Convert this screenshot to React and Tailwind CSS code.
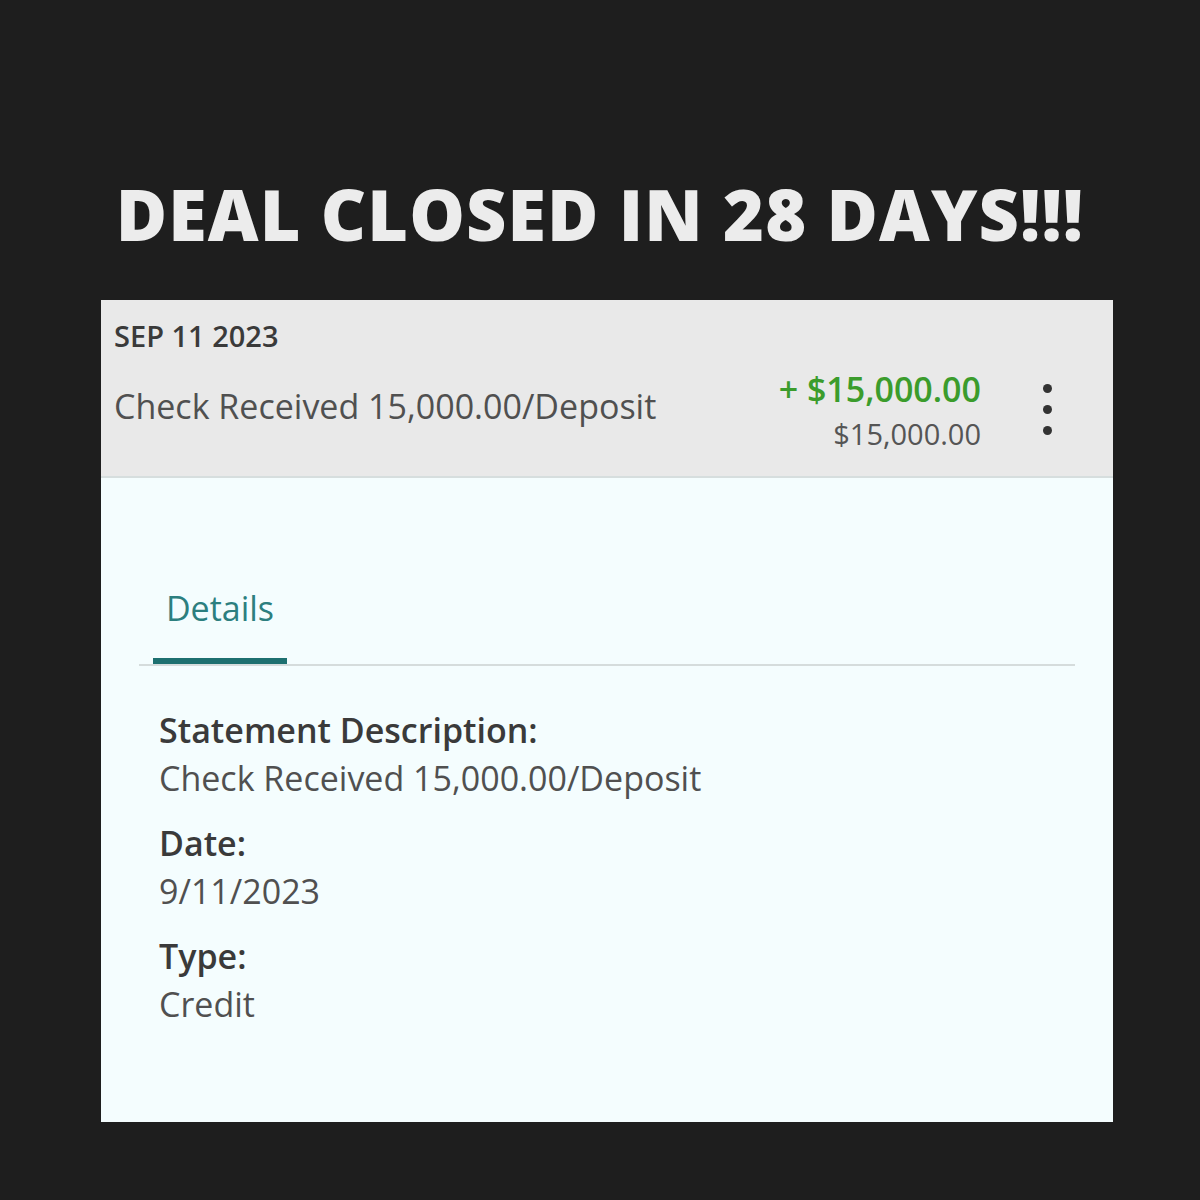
import React from 'react'

const Field = ({ label, value }) => (
  <div className="flex flex-col">
    <span className="text-[34px] leading-[48px] font-semibold text-[#3a3a3a]">{label}</span>
    <span className="text-[34px] leading-[48px] text-[#505050]">{value}</span>
  </div>
)

export default function App() {
  return (
    <div className="w-[1200px] h-[1200px] bg-[#1e1e1e] flex flex-col items-center" style={{ fontFamily: '"Open Sans", sans-serif' }}>
      <h1 className="mt-[176px] h-[124px] text-[70px] leading-[76px] font-extrabold text-[#ececec] tracking-[1.1px]">
        DEAL CLOSED IN 28 DAYS!!!
      </h1>

      <div className="w-[1012px] ml-[14px] flex flex-col">
        <div className="h-[178px] bg-[#e9e9e9] border-b-2 border-[#d6dede] flex items-start pl-[13px] pr-[61px]">
          <div className="flex-1 flex flex-col">
            <span className="mt-[17px] text-[29px] leading-[38px] font-semibold text-[#3a3a3a]">SEP 11 2023</span>
            <span className="mt-[30px] text-[34px] leading-[42px] text-[#505050]">Check Received 15,000.00/Deposit</span>
          </div>
          <div className="mt-[68px] flex flex-col items-end">
            <span className="text-[34px] leading-[42px] font-semibold text-[#3b9c2c]">+ $15,000.00</span>
            <span className="mt-[6px] text-[29px] leading-[36px] text-[#555555]">$15,000.00</span>
          </div>
          <div className="ml-[62px] mt-[84px] flex flex-col gap-[12px]">
            <span className="w-[9px] h-[9px] rounded-full bg-[#333333]" />
            <span className="w-[9px] h-[9px] rounded-full bg-[#333333]" />
            <span className="w-[9px] h-[9px] rounded-full bg-[#333333]" />
          </div>
        </div>

        <div className="h-[644px] bg-[#f4fdfe] flex flex-col px-[38px]">
          <div className="mt-[110px] border-b-2 border-[#d5dcdc] flex">
            <div className="ml-[14px] w-[134px] flex flex-col items-center">
              <span className="text-[34px] leading-[40px] text-[#2c7f7f]">Details</span>
              <span className="mt-[30px] w-full h-[6px] bg-[#1d7070]" />
            </div>
          </div>
          <div className="mt-[40px] ml-[20px] flex flex-col gap-[17px]">
            <Field label="Statement Description:" value="Check Received 15,000.00/Deposit" />
            <Field label="Date:" value="9/11/2023" />
            <Field label="Type:" value="Credit" />
          </div>
        </div>
      </div>
    </div>
  )
}
